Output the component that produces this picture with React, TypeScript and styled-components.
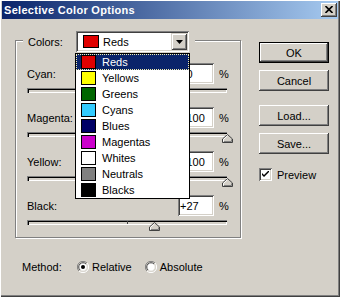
import styled, { createGlobalStyle } from 'styled-components';

const FACE = '#D4D0C8';

const GlobalStyle = createGlobalStyle`
  html, body {
    margin: 0;
    padding: 0;
    background: ${FACE};
  }
  body {
    font-family: 'Liberation Sans', Arial, sans-serif;
    font-size: 11px;
    color: #000;
  }
`;

const colorOptions = [
  { name: 'Reds', swatch: '#E00000' },
  { name: 'Yellows', swatch: '#FFFF00' },
  { name: 'Greens', swatch: '#006600' },
  { name: 'Cyans', swatch: '#33CCFF' },
  { name: 'Blues', swatch: '#000066' },
  { name: 'Magentas', swatch: '#CC00CC' },
  { name: 'Whites', swatch: '#FFFFFF' },
  { name: 'Neutrals', swatch: '#808080' },
  { name: 'Blacks', swatch: '#000000' },
];

const sliders = [
  { label: 'Cyan:', value: 0 },
  { label: 'Magenta:', value: 100 },
  { label: 'Yellow:', value: 100 },
  { label: 'Black:', value: 27 },
];

function formatValue(v: number) {
  return v >= 0 ? `+${v}` : `${v}`;
}

export default function App() {
  return (
    <>
      <GlobalStyle />
      <Window>
        <TitleBar>
          <Title>Selective Color Options</Title>
          <CloseButton>
            <svg width="8" height="7" viewBox="0 0 8 7">
              <path d="M0.5 0 L7.5 7 M7.5 0 L0.5 7" stroke="#000" strokeWidth="1.6" />
            </svg>
          </CloseButton>
        </TitleBar>

        <Body>
          <LeftColumn>
            <Group>
              <Legend>
                <LegendLabel>Colors:</LegendLabel>
                <Combo>
                  <Swatch $color="#E00000" $w={16} $h={13} />
                  <ComboText>Reds</ComboText>
                  <ArrowButton>
                    <svg width="7" height="4" viewBox="0 0 7 4">
                      <polygon points="0,0 7,0 3.5,4" fill="#000" />
                    </svg>
                  </ArrowButton>
                  <DropList>
                    {colorOptions.map((c, i) => (
                      <DropItem key={c.name} $selected={i === 0}>
                        <Swatch $color={c.swatch} $w={15} $h={14} />
                        <ItemText>{c.name}</ItemText>
                      </DropItem>
                    ))}
                  </DropList>
                </Combo>
              </Legend>

              <Sliders>
                {sliders.map((s) => (
                  <SliderRow key={s.label}>
                    <ValueLine>
                      <SliderLabel>{s.label}</SliderLabel>
                      <ValueField>{formatValue(s.value)}</ValueField>
                      <Percent>%</Percent>
                    </ValueLine>
                    <Track>
                      <CenterTick />
                      <Thumb style={{ left: 100 + s.value - 5 }}>
                        <svg width="11" height="9" viewBox="0 0 11 9">
                          <polygon points="5.5,0.5 10.5,5 10.5,8.5 0.5,8.5 0.5,5" fill={FACE} stroke="#404040" />
                          <polyline points="1.5,7.5 1.5,5.4 5.5,1.8" fill="none" stroke="#fff" />
                          <polyline points="2,7.5 9.5,7.5 9.5,5.4" fill="none" stroke="#808080" />
                        </svg>
                      </Thumb>
                    </Track>
                  </SliderRow>
                ))}
              </Sliders>
            </Group>

            <MethodRow>
              <MethodLabel>Method:</MethodLabel>
              <RadioOption>
                <Radio checked />
                <span>Relative</span>
              </RadioOption>
              <RadioOption $spaced>
                <Radio />
                <span>Absolute</span>
              </RadioOption>
            </MethodRow>
          </LeftColumn>

          <RightColumn>
            <DefaultFrame>
              <Button $inner>OK</Button>
            </DefaultFrame>
            <Button $gap={7}>Cancel</Button>
            <Button $gap={14}>Load...</Button>
            <Button $gap={7}>Save...</Button>
            <CheckRow>
              <CheckBox>
                <svg width="7" height="7" viewBox="0 0 7 7">
                  <path d="M0 2 L0 4 L2 6 L7 1 L7 -1 L2 4 Z" fill="#000" />
                </svg>
              </CheckBox>
              <span>Preview</span>
            </CheckRow>
          </RightColumn>
        </Body>
      </Window>
    </>
  );
}

function Radio({ checked = false }: { checked?: boolean }) {
  return (
    <RadioBox>
      <svg width="12" height="12" viewBox="0 0 12 12">
        <path d="M10 2 A5.5 5.5 0 0 0 2 10" stroke="#808080" fill="none" />
        <path d="M2 10 A5.5 5.5 0 0 0 10 2" stroke="#fff" fill="none" />
        <circle cx="6" cy="6" r="4.5" fill="#fff" />
        <path d="M9 3 A4.2 4.2 0 0 0 3 9" stroke="#404040" fill="none" />
        <path d="M3 9 A4.2 4.2 0 0 0 9 3" stroke={FACE} fill="none" />
        {checked && <circle cx="6" cy="6" r="2" fill="#000" />}
      </svg>
    </RadioBox>
  );
}

const Window = styled.div`
  width: 340px;
  height: 297px;
  box-sizing: border-box;
  background: ${FACE};
  box-shadow: inset 1px 1px 0 #fff, inset -1px -1px 0 #404040, inset -2px -2px 0 #808080;
  display: flex;
  flex-direction: column;
  overflow: hidden;
`;

const TitleBar = styled.div`
  margin: 1px 2px 0 2px;
  height: 18px;
  display: flex;
  align-items: center;
  background: linear-gradient(to right, #0a246a, #a6caf0);
`;

const Title = styled.div`
  padding-left: 2px;
  color: #fff;
  font-weight: bold;
  font-size: 11px;
  letter-spacing: 0.3px;
`;

const CloseButton = styled.div`
  margin-left: auto;
  margin-right: 1px;
  width: 16px;
  height: 14px;
  box-sizing: border-box;
  background: ${FACE};
  box-shadow: inset -1px -1px 0 #404040, inset 1px 1px 0 #fff, inset -2px -2px 0 #808080;
  display: flex;
  align-items: center;
  justify-content: center;
  padding-right: 1px;
  padding-bottom: 1px;
`;

const Body = styled.div`
  display: flex;
  padding: 21px 0 0 15px;
`;

const LeftColumn = styled.div`
  width: 226px;
  display: flex;
  flex-direction: column;
`;

const Group = styled.div`
  width: 226px;
  height: 198px;
  box-sizing: border-box;
  border: 1px solid #808080;
  box-shadow: 1px 1px 0 #fff, inset 1px 1px 0 #fff;
  display: flex;
  flex-direction: column;
`;

const Legend = styled.div`
  align-self: flex-start;
  margin: -10px 0 0 7px;
  padding: 0 6px 0 5px;
  background: ${FACE};
  display: flex;
  align-items: center;
`;

const LegendLabel = styled.span`
  width: 48px;
`;

const Combo = styled.div`
  position: relative;
  width: 113px;
  height: 21px;
  box-sizing: border-box;
  background: #fff;
  box-shadow: inset 1px 1px 0 #808080, inset -1px -1px 0 #fff, inset 2px 2px 0 #404040,
    inset -2px -2px 0 ${FACE};
  display: flex;
  align-items: center;
  padding: 2px 2px 2px 7px;
`;

const Swatch = styled.div<{ $color: string; $w: number; $h: number }>`
  flex: none;
  width: ${(p) => p.$w}px;
  height: ${(p) => p.$h}px;
  box-sizing: border-box;
  border: 1px solid #000;
  background: ${(p) => p.$color};
`;

const ComboText = styled.span`
  margin-left: 4px;
`;

const ArrowButton = styled.div`
  margin-left: auto;
  width: 16px;
  height: 17px;
  box-sizing: border-box;
  background: ${FACE};
  box-shadow: inset 1px 1px 0 ${FACE}, inset -1px -1px 0 #404040, inset 2px 2px 0 #fff,
    inset -2px -2px 0 #808080;
  display: flex;
  align-items: center;
  justify-content: center;
  padding-top: 1px;
`;

const DropList = styled.div`
  position: absolute;
  z-index: 5;
  top: 22px;
  left: -1px;
  width: 115px;
  box-sizing: border-box;
  border: 1px solid #000;
  background: #fff;
`;

const DropItem = styled.div<{ $selected?: boolean }>`
  height: 16px;
  box-sizing: border-box;
  display: flex;
  align-items: center;
  padding-left: ${(p) => (p.$selected ? 4 : 5)}px;
  background: ${(p) => (p.$selected ? '#0a246a' : '#fff')};
  color: ${(p) => (p.$selected ? '#fff' : '#000')};
  border: ${(p) => (p.$selected ? '1px dotted #f5f0b0' : 'none')};
`;

const ItemText = styled.span`
  margin-left: 6px;
`;

const Sliders = styled.div`
  display: flex;
  flex-direction: column;
  gap: 14px;
  padding-left: 11px;
  margin-top: 11px;
`;

const SliderRow = styled.div`
  display: flex;
  flex-direction: column;
`;

const ValueLine = styled.div`
  display: flex;
  align-items: center;
  height: 21px;
`;

const SliderLabel = styled.span`
  width: 151px;
`;

const ValueField = styled.div`
  width: 36px;
  height: 21px;
  box-sizing: border-box;
  background: #fff;
  box-shadow: inset 1px 1px 0 #808080, inset -1px -1px 0 #fff, inset 2px 2px 0 #404040,
    inset -2px -2px 0 ${FACE};
  display: flex;
  align-items: center;
  padding-left: 2px;
`;

const Percent = styled.span`
  margin-left: 5px;
`;

const Track = styled.div`
  position: relative;
  margin-top: 4px;
  width: 200px;
  height: 5px;
  box-sizing: border-box;
  background: ${FACE};
  box-shadow: inset 1px 1px 0 #808080, inset 2px 2px 0 #000, inset -1px -1px 0 #fff,
    inset -2px -2px 0 ${FACE};
`;

const CenterTick = styled.div`
  position: absolute;
  left: 100px;
  top: 1px;
  width: 1px;
  height: 3px;
  background: #404040;
`;

const Thumb = styled.div`
  position: absolute;
  top: 2px;
  width: 11px;
  height: 9px;
  line-height: 0;
`;

const MethodRow = styled.div`
  display: flex;
  align-items: center;
  height: 14px;
  margin-top: 22px;
  padding-left: 7px;
`;

const MethodLabel = styled.span`
  width: 55px;
`;

const RadioOption = styled.label<{ $spaced?: boolean }>`
  display: flex;
  align-items: center;
  gap: 3px;
  margin-left: ${(p) => (p.$spaced ? 13 : 0)}px;
`;

const RadioBox = styled.span`
  width: 12px;
  height: 12px;
  line-height: 0;
`;

const RightColumn = styled.div`
  margin-left: 18px;
  padding-top: 2px;
  display: flex;
  flex-direction: column;
`;

const DefaultFrame = styled.div`
  width: 70px;
  height: 21px;
  box-sizing: border-box;
  border: 1px solid #000;
`;

const Button = styled.div<{ $gap?: number; $inner?: boolean }>`
  width: ${(p) => (p.$inner ? 68 : 70)}px;
  height: ${(p) => (p.$inner ? 19 : 21)}px;
  margin-top: ${(p) => p.$gap ?? 0}px;
  box-sizing: border-box;
  background: ${FACE};
  box-shadow: inset -1px -1px 0 #404040, inset 1px 1px 0 #fff, inset -2px -2px 0 #808080;
  display: flex;
  align-items: center;
  justify-content: center;
`;

const CheckRow = styled.div`
  display: flex;
  align-items: center;
  gap: 5px;
  margin-top: 14px;
`;

const CheckBox = styled.div`
  width: 13px;
  height: 13px;
  box-sizing: border-box;
  background: #fff;
  box-shadow: inset 1px 1px 0 #808080, inset -1px -1px 0 #fff, inset 2px 2px 0 #404040,
    inset -2px -2px 0 ${FACE};
  display: flex;
  align-items: center;
  justify-content: center;
`;
